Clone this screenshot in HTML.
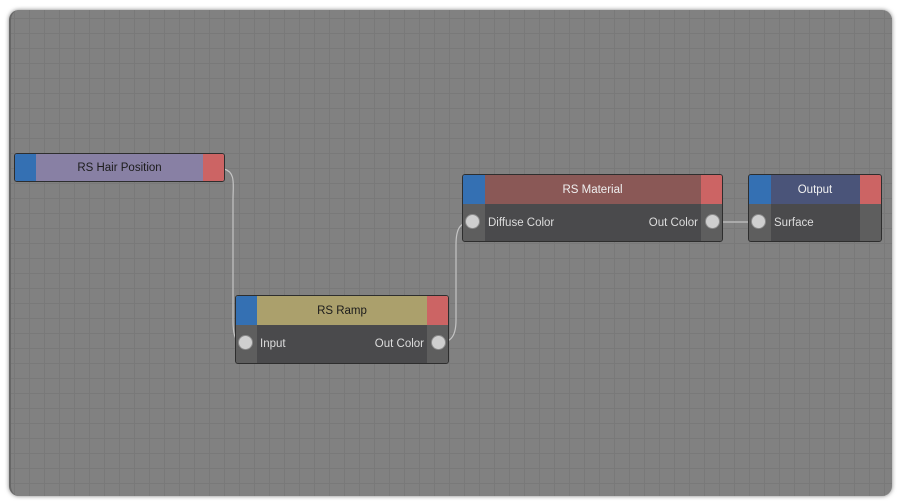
<!DOCTYPE html>
<html><head><style>
body{margin:0;width:906px;height:504px;background:#fff;position:relative;overflow:hidden;font-family:"Liberation Sans",sans-serif;}
.canvas{position:absolute;left:9px;top:10px;width:883px;height:486px;border-radius:10px;background-color:#818181;
background-image:linear-gradient(#797979 1px,transparent 1px),linear-gradient(90deg,#797979 1px,transparent 1px);
background-size:15px 15px;background-position:3px 8px;box-shadow:0 0 4px rgba(0,0,0,.5);border-left:2px solid #666;box-sizing:border-box;}
.node{position:absolute;border:1px solid #2e2e2e;border-radius:3px;overflow:hidden;background:#4a4a4c;box-sizing:border-box;}
.hdr{position:absolute;left:0;right:0;top:0;text-align:center;font-size:11.5px;}
.b{position:absolute;left:0;top:0;background:#3470b3;}
.r{position:absolute;right:0;top:0;background:#cc6464;}
.col{position:absolute;bottom:0;background:#5e5e5e;}
.port{position:absolute;width:13px;height:13px;border-radius:50%;background:#cfcfcf;border:1.5px solid #8a8a8a;box-sizing:content-box;}
.lbl{position:absolute;font-size:11.5px;color:#ddd;}
svg{position:absolute;left:0;top:0}
</style></head><body>
<div class="canvas"></div>
<svg width="906" height="504"><g fill="none" stroke="#c4c4c4" stroke-width="1.2">
<path d="M224 169 C236 172 233 185 233 200 L233 320 C233 338 236 343 246 343"/>
<path d="M436 343 C450 343 456 338 456 320 L456 245 C456 228 460 222 473 222"/>
<path d="M711 222 L759 222"/></g></svg>

<div class="node" style="left:14px;top:153px;width:211px;height:29px;">
 <div class="hdr" style="height:27px;line-height:28px;background:#8880a4;color:#1c1c1c;">RS Hair Position</div>
 <div class="b" style="width:21px;height:27px"></div><div class="r" style="width:21px;height:27px"></div>
</div>

<div class="node" style="left:235px;top:295px;width:214px;height:69px;">
 <div class="hdr" style="height:29px;line-height:31px;background:#aba06c;color:#1c1c1c;">RS Ramp</div>
 <div class="b" style="width:21px;height:29px"></div><div class="r" style="width:21px;height:29px"></div>
 <div class="col" style="left:0;width:21px;top:29px"></div><div class="col" style="right:0;width:21px;top:29px"></div>
 <div class="port" style="left:2px;top:39px"></div><div class="port" style="right:2px;top:39px"></div>
 <div class="lbl" style="left:24px;top:42px">Input</div><div class="lbl" style="right:24px;top:42px">Out Color</div>
</div>

<div class="node" style="left:462px;top:174px;width:261px;height:68px;">
 <div class="hdr" style="height:29px;line-height:31px;background:#8a5856;color:#f0f0f0;">RS Material</div>
 <div class="b" style="width:22px;height:29px"></div><div class="r" style="width:21px;height:29px"></div>
 <div class="col" style="left:0;width:22px;top:29px"></div><div class="col" style="right:0;width:21px;top:29px"></div>
 <div class="port" style="left:2px;top:39px"></div><div class="port" style="right:2px;top:39px"></div>
 <div class="lbl" style="left:25px;top:42px">Diffuse Color</div><div class="lbl" style="right:24px;top:42px">Out Color</div>
</div>

<div class="node" style="left:748px;top:174px;width:134px;height:68px;">
 <div class="hdr" style="height:29px;line-height:31px;background:#4a5479;color:#f0f0f0;">Output</div>
 <div class="b" style="width:22px;height:29px"></div><div class="r" style="width:21px;height:29px"></div>
 <div class="col" style="left:0;width:22px;top:29px"></div><div class="col" style="right:0;width:21px;top:29px"></div>
 <div class="port" style="left:2px;top:39px"></div>
 <div class="lbl" style="left:25px;top:42px">Surface</div>
</div>
</body></html>
